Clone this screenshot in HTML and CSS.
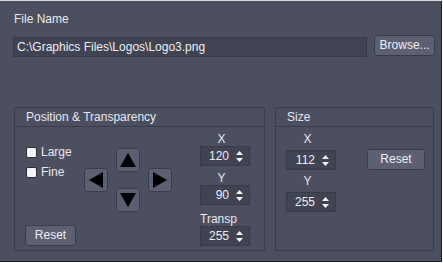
FILE: index.html
```html
<!DOCTYPE html>
<html lang="en">
<head>
  <meta charset="UTF-8">
  <title>Logo Settings</title>
  <link rel="stylesheet" href="styles.css">
</head>
<body>
  <div class="window">
    <div class="label">File Name</div>
    <div class="file-row">
      <div class="text-field">C:\Graphics Files\Logos\Logo3.png</div>
      <div class="btn browse">Browse...</div>
    </div>

    <div class="groups">
      <div class="group pos-group">
        <div class="group-title">Position &amp; Transparency</div>
        <div class="group-body">
          <div class="checks">
            <div class="check"><span class="box"></span>Large</div>
            <div class="check"><span class="box"></span>Fine</div>
            <div class="btn reset small-reset">Reset</div>
          </div>

          <div class="arrows">
            <div class="arrow-row">
              <div class="btn arrow"><svg width="16" height="14" viewBox="0 0 16 14"><polygon points="8,0 16,14 0,14" fill="#000"/></svg></div>
            </div>
            <div class="arrow-row mid">
              <div class="btn arrow"><svg width="14" height="16" viewBox="0 0 14 16"><polygon points="0,8 14,0 14,16" fill="#000"/></svg></div>
              <div class="btn arrow"><svg width="14" height="16" viewBox="0 0 14 16"><polygon points="14,8 0,0 0,16" fill="#000"/></svg></div>
            </div>
            <div class="arrow-row mid">
              <div class="btn arrow"><svg width="16" height="14" viewBox="0 0 16 14"><polygon points="8,14 16,0 0,0" fill="#000"/></svg></div>
            </div>
          </div>

          <div class="spins">
            <div class="spin-label">X</div>
            <div class="spin"><span class="val">120</span><svg class="updown" width="7" height="11" viewBox="0 0 7 11"><polygon points="3.5,0 7,4 0,4" fill="#f2f2f2"/><polygon points="3.5,11 7,7 0,7" fill="#f2f2f2"/></svg></div>
            <div class="spin-label gap">Y</div>
            <div class="spin"><span class="val">90</span><svg class="updown" width="7" height="11" viewBox="0 0 7 11"><polygon points="3.5,0 7,4 0,4" fill="#f2f2f2"/><polygon points="3.5,11 7,7 0,7" fill="#f2f2f2"/></svg></div>
            <div class="spin-label gap left">Transp</div>
            <div class="spin"><span class="val">255</span><svg class="updown" width="7" height="11" viewBox="0 0 7 11"><polygon points="3.5,0 7,4 0,4" fill="#f2f2f2"/><polygon points="3.5,11 7,7 0,7" fill="#f2f2f2"/></svg></div>
          </div>
        </div>
      </div>

      <div class="group size-group">
        <div class="group-title">Size</div>
        <div class="group-body">
          <div class="spins size-spins">
            <div class="spin-label">X</div>
            <div class="spin"><span class="val">112</span><svg class="updown" width="7" height="11" viewBox="0 0 7 11"><polygon points="3.5,0 7,4 0,4" fill="#f2f2f2"/><polygon points="3.5,11 7,7 0,7" fill="#f2f2f2"/></svg></div>
            <div class="spin-label gap">Y</div>
            <div class="spin"><span class="val">255</span><svg class="updown" width="7" height="11" viewBox="0 0 7 11"><polygon points="3.5,0 7,4 0,4" fill="#f2f2f2"/><polygon points="3.5,11 7,7 0,7" fill="#f2f2f2"/></svg></div>
          </div>
          <div class="size-reset">
            <div class="btn reset wide-reset">Reset</div>
          </div>
        </div>
      </div>
    </div>
  </div>
</body>
</html>
```

FILE: styles.css
```css
body {
  margin: 0;
  font-family: "Liberation Sans", Arial, sans-serif;
  font-size: 12px;
  color: #e6e8ee;
}

.window {
  width: 443px;
  height: 263px;
  box-sizing: border-box;
  background: #4c4f5f;
  border-top: 1px solid #d8d8d8;
  border-right: 1px solid #ffffff;
  border-bottom: 1px solid #ffffff;
  box-shadow: inset -1px -1px 0 #1c1d24;
  padding: 11px 7px 0 13px;
}

.label {
  line-height: 14px;
  padding-left: 1px;
  margin-bottom: 9px;
}

.file-row {
  display: flex;
  align-items: flex-start;
  gap: 7px;
}

.text-field {
  width: 355px;
  height: 20px;
  box-sizing: border-box;
  background: #404352;
  border: 1px solid #373a47;
  padding-left: 3px;
  line-height: 18px;
  color: #eceef2;
  margin-top: 2px;
}

.btn {
  box-sizing: border-box;
  background: #5c6072;
  border: 1px solid #393c49;
  border-radius: 3px;
  text-align: center;
  color: #eceef4;
}

.browse {
  width: 61px;
  height: 21px;
  line-height: 19px;
}

.groups {
  display: flex;
  gap: 10px;
  margin-top: 50px;
  padding-left: 1px;
}

.group {
  height: 144px;
  box-sizing: border-box;
  border: 1px solid #393c4a;
  display: flex;
  flex-direction: column;
}

.pos-group {
  width: 251px;
}

.size-group {
  width: 159px;
}

.group-title {
  height: 19px;
  line-height: 18px;
  box-sizing: border-box;
  border-bottom: 1px solid #393c4a;
  padding-left: 11px;
  color: #e4e8f2;
}

.group-body {
  flex: 1;
  display: flex;
}

.checks {
  width: 58px;
  padding: 15px 0 4px 11px;
  display: flex;
  flex-direction: column;
}

.check {
  display: flex;
  align-items: center;
  height: 20px;
}

.box {
  width: 11px;
  height: 11px;
  box-sizing: border-box;
  background: #f4f4f6;
  border: 1px solid #2a2c36;
  border-radius: 2px;
  margin-right: 4px;
}

.reset {
  height: 21px;
  line-height: 19px;
}

.small-reset {
  width: 51px;
  margin-top: auto;
  margin-left: -1px;
}

.arrows {
  padding-top: 21px;
  width: 88px;
  display: flex;
  flex-direction: column;
  align-items: center;
}

.arrow-row {
  display: flex;
  gap: 40px;
}

.arrow-row.mid {
  margin-top: -4px;
}

.arrow {
  width: 24px;
  height: 24px;
  display: flex;
  align-items: center;
  justify-content: center;
}

.spins {
  margin-left: 28px;
  padding-top: 5px;
  width: 50px;
}

.spin-label {
  width: 43px;
  text-align: center;
  line-height: 14px;
}

.spin-label.gap {
  margin-top: 5px;
}

.spin-label.left {
  text-align: left;
  margin-top: 7px;
}

.spin {
  width: 50px;
  height: 20px;
  box-sizing: border-box;
  background: #404352;
  border: 1px solid #373a47;
  display: flex;
  align-items: center;
  justify-content: flex-end;
  padding-right: 6px;
  color: #eceef2;
}

.val {
  margin-right: 7px;
}

.size-spins {
  margin-left: 10px;
}

.size-spins .spin-label {
  margin-bottom: 4px;
}

.size-spins .spin-label.gap {
  margin-top: 4px;
}

.size-reset {
  padding-top: 22px;
  margin-left: 31px;
}

.wide-reset {
  width: 58px;
}
```
